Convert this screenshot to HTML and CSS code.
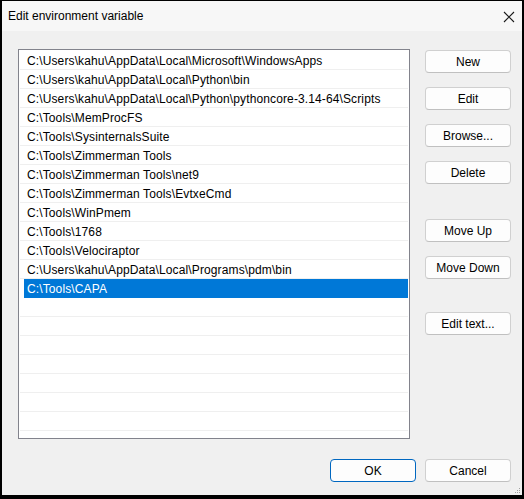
FILE: index.html
```html
<!DOCTYPE html>
<html lang="en">
<head>
    <meta charset="UTF-8">
    <meta name="viewport" content="width=device-width, initial-scale=1.0">
    <title>Edit environment variable</title>
    <link rel="stylesheet" href="styles.css">
</head>
<body>
  <div class="window">
    <div class="titlebar">
        <span class="title">Edit environment variable</span>
        <svg class="close" width="12" height="12" viewBox="0 0 12 12">
            <path d="M1 1 L11 11 M11 1 L1 11" stroke="#1a1a1a" stroke-width="1.1" fill="none"/>
        </svg>
    </div>

    <div class="content">
        <div class="main">
            <div class="list">
                <div class="row">C:\Users\kahu\AppData\Local\Microsoft\WindowsApps</div>
                <div class="row">C:\Users\kahu\AppData\Local\Python\bin</div>
                <div class="row">C:\Users\kahu\AppData\Local\Python\pythoncore-3.14-64\Scripts</div>
                <div class="row">C:\Tools\MemProcFS</div>
                <div class="row">C:\Tools\SysinternalsSuite</div>
                <div class="row">C:\Tools\Zimmerman Tools</div>
                <div class="row">C:\Tools\Zimmerman Tools\net9</div>
                <div class="row">C:\Tools\Zimmerman Tools\EvtxeCmd</div>
                <div class="row">C:\Tools\WinPmem</div>
                <div class="row">C:\Tools\1768</div>
                <div class="row">C:\Tools\Velociraptor</div>
                <div class="row">C:\Users\kahu\AppData\Local\Programs\pdm\bin</div>
                <div class="row selected">C:\Tools\CAPA</div>
                <div class="row"></div>
                <div class="row"></div>
                <div class="row"></div>
                <div class="row"></div>
                <div class="row"></div>
                <div class="row"></div>
                <div class="row"></div>
                <div class="row"></div>
            </div>

            <div class="side">
                <button class="btn">New</button>
                <button class="btn">Edit</button>
                <button class="btn">Browse...</button>
                <button class="btn">Delete</button>
                <button class="btn group">Move Up</button>
                <button class="btn">Move Down</button>
                <button class="btn group2">Edit text...</button>
            </div>
        </div>

        <div class="footer">
            <button class="btn primary">OK</button>
            <button class="btn">Cancel</button>
        </div>
    </div>

    <!-- size grip -->
    <svg class="grip" width="6" height="6" viewBox="0 0 6 6">
        <rect x="4" y="0" width="1" height="1" fill="#a0a0a0"/>
        <rect x="2" y="2" width="1" height="1" fill="#a0a0a0"/>
        <rect x="4" y="2" width="1" height="1" fill="#a0a0a0"/>
        <rect x="0" y="4" width="1" height="1" fill="#a0a0a0"/>
        <rect x="2" y="4" width="1" height="1" fill="#a0a0a0"/>
        <rect x="4" y="4" width="1" height="1" fill="#a0a0a0"/>
    </svg>
  </div>
</body>
</html>
```

FILE: styles.css
```css
*{
    margin: 0;
    padding: 0;
    box-sizing: border-box;
}
body{
    width: 524px;
    height: 499px;
    background: #000;
    font-family: "Liberation Sans", Arial, sans-serif;
    font-size: 12px;
    color: #000;
    overflow: hidden;
}
.window{
    position: relative;
    width: 524px;
    height: 499px;
    border-style: solid;
    border-color: #000;
    border-width: 1px 2px 4px 2px;
    background: #f0f0f0;
    display: flex;
    flex-direction: column;
}
.titlebar{
    height: 30px;
    background: #f7f7f7;
    display: flex;
    align-items: center;
    justify-content: space-between;
    padding: 0 7px 0 6px;
}
.title{
    font-size: 12px;
    color: #000;
}
.close{
    display: block;
    margin-top: 1px;
}
.content{
    flex: 1;
    display: flex;
    flex-direction: column;
    padding: 18px 11px 0 16px;
}
.main{
    display: flex;
    gap: 15px;
}
.list{
    width: 392px;
    height: 390px;
    background: #fff;
    border: 1px solid #82838c;
    padding: 1px 1px 0 1px;
    overflow: hidden;
}
.row{
    height: 19px;
    line-height: 20px;
    border-bottom: 1px solid #efefef;
    padding-left: 7px;
    letter-spacing: 0.12px;
    white-space: nowrap;
    overflow: hidden;
}
.row.selected{
    background: #0078d7;
    color: #fff;
    margin-left: 4px;
    padding-left: 3px;
    border-bottom-color: #0078d7;
}
.side{
    display: flex;
    flex-direction: column;
    gap: 14px;
    padding-top: 1px;
}
.btn{
    width: 86px;
    height: 23px;
    background: #fdfdfd;
    border: 1px solid #d0d0d0;
    border-bottom-color: #c0c0c0;
    border-radius: 4px;
    font-family: "Liberation Sans", Arial, sans-serif;
    font-size: 12px;
    color: #000;
    padding-top: 1px;
}
.side .group{
    margin-top: 21px;
}
.side .group2{
    margin-top: 19px;
}
.footer{
    display: flex;
    justify-content: flex-end;
    gap: 9px;
    margin-top: 20px;
}
.btn.primary{
    border-color: #0067c0;
}
.grip{
    position: absolute;
    right: 1px;
    bottom: 1px;
}
```
